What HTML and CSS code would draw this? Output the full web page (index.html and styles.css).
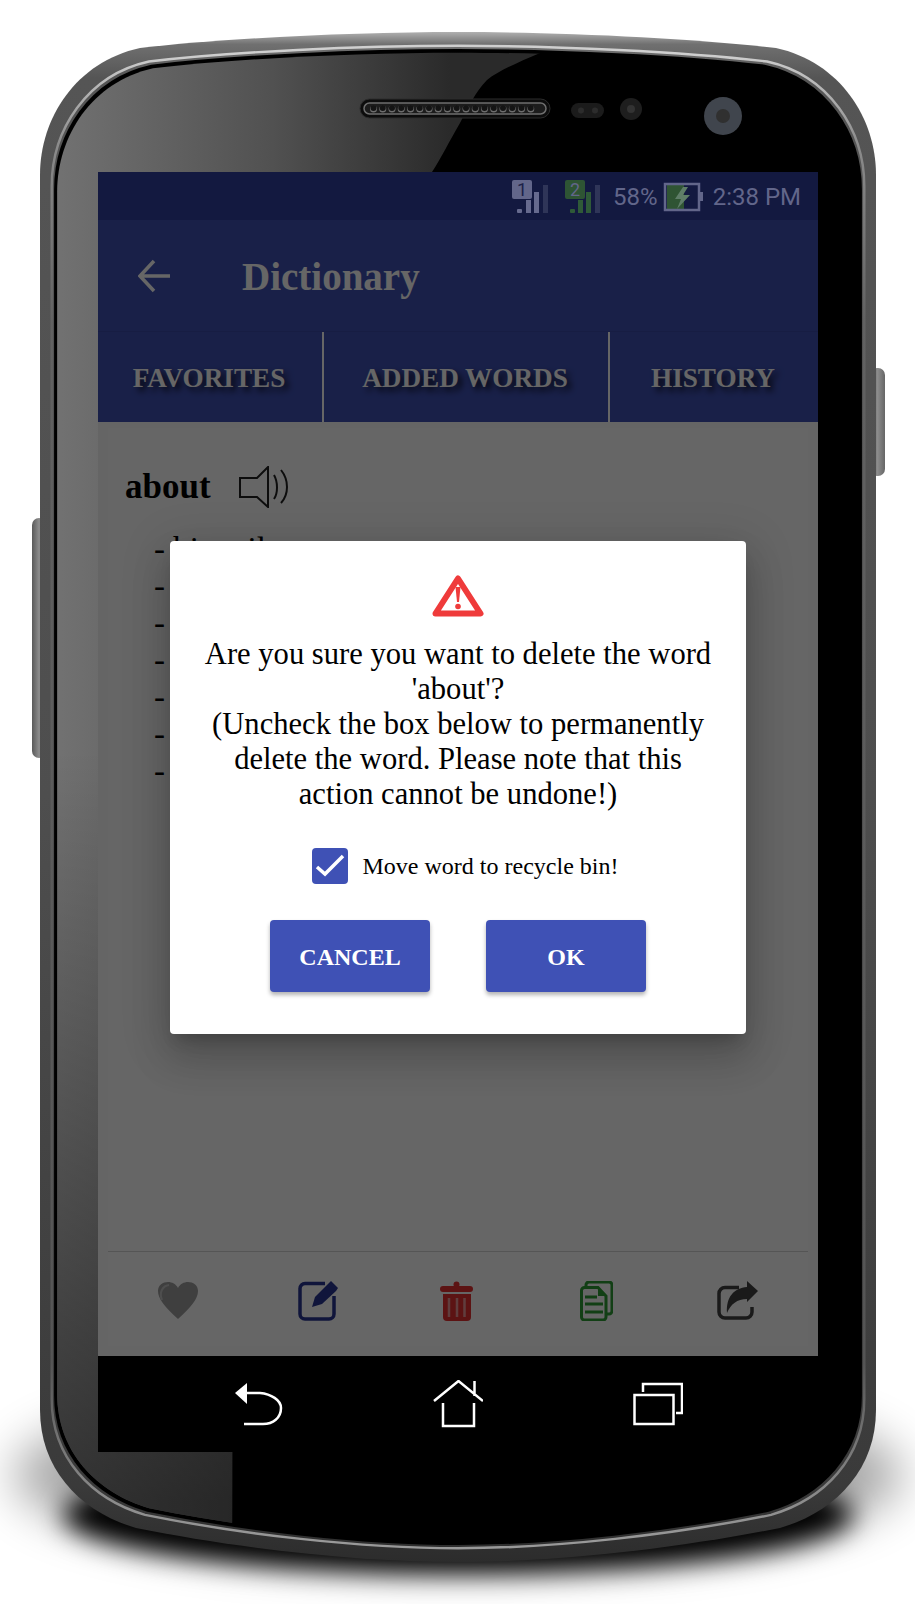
FILE: index.html
```html
<!DOCTYPE html>
<html lang="en">
<head>
    <meta charset="UTF-8">
    <meta name="viewport" content="width=device-width, initial-scale=1.0">
    <title>Dictionary</title>
    <link rel="stylesheet" href="styles.css">
</head>
<body>
    <div class="device">
        <svg class="phone" viewBox="0 0 915 1604" aria-hidden="true">
            <defs>
                <path id="shell" d="M458 32 C560 32 690 38 776 48 C840 62 876 118 876 175 L876 1410 C876 1470 835 1512 780 1528 C680 1548 560 1562 458 1562 C356 1562 236 1548 136 1528 C81 1512 40 1470 40 1410 L40 175 C40 118 76 62 140 48 C226 38 356 32 458 32 Z"/>
                <linearGradient id="frameFill" gradientUnits="userSpaceOnUse" x1="0" y1="32" x2="0" y2="1562">
                    <stop offset="0" stop-color="#b0b0b0"/>
                    <stop offset="0.008" stop-color="#707070"/>
                    <stop offset="0.03" stop-color="#555"/>
                    <stop offset="0.5" stop-color="#4e4e4e"/>
                    <stop offset="0.95" stop-color="#3a3a3a"/>
                    <stop offset="1" stop-color="#2c2c2c"/>
                </linearGradient>
                <linearGradient id="rimFill" gradientUnits="userSpaceOnUse" x1="0" y1="40" x2="0" y2="1555">
                    <stop offset="0" stop-color="#cfcfcf"/>
                    <stop offset="0.06" stop-color="#8c8c8c"/>
                    <stop offset="0.18" stop-color="#626262"/>
                    <stop offset="0.88" stop-color="#555"/>
                    <stop offset="0.97" stop-color="#8a8a8a"/>
                    <stop offset="1" stop-color="#999"/>
                </linearGradient>
                <linearGradient id="glareFill" gradientUnits="userSpaceOnUse" x1="55" y1="0" x2="450" y2="0">
                    <stop offset="0" stop-color="#727272"/>
                    <stop offset="0.55" stop-color="#515151"/>
                    <stop offset="1" stop-color="#2a2a2a"/>
                </linearGradient>
                <linearGradient id="glareFade" gradientUnits="userSpaceOnUse" x1="0" y1="750" x2="0" y2="1500">
                    <stop offset="0" stop-color="#000" stop-opacity="0"/>
                    <stop offset="1" stop-color="#000" stop-opacity="0.55"/>
                </linearGradient>
                <linearGradient id="keyFill" x1="0" y1="0" x2="1" y2="0">
                    <stop offset="0" stop-color="#5a5a5a"/>
                    <stop offset="0.5" stop-color="#8c8c8c"/>
                    <stop offset="1" stop-color="#666"/>
                </linearGradient>
                <clipPath id="glassClip">
                    <use href="#shell" transform="translate(458 797) scale(.959 .973) translate(-458 -797)"/>
                </clipPath>
                <filter id="soften" x="-15%" y="-60%" width="130%" height="220%">
                    <feGaussianBlur stdDeviation="13"/>
                </filter>
                <filter id="softenWide" x="-20%" y="-60%" width="140%" height="220%">
                    <feGaussianBlur stdDeviation="24"/>
                </filter>
            </defs>

            <ellipse cx="458" cy="1475" rx="445" ry="90" fill="#000" opacity="0.35" filter="url(#softenWide)"/>
            <ellipse cx="458" cy="1515" rx="395" ry="58" fill="#000" filter="url(#soften)"/>

            <rect x="32" y="518" width="14" height="240" rx="7" fill="url(#keyFill)"/>
            <rect x="870" y="368" width="15" height="108" rx="7" fill="url(#keyFill)"/>

            <use href="#shell" fill="url(#frameFill)"/>
            <use href="#shell" fill="none" stroke="url(#rimFill)" stroke-width="2.5" transform="translate(458 797) scale(.972 .982) translate(-458 -797)"/>
            <use href="#shell" fill="#000" stroke="#000" stroke-width="2" transform="translate(458 797) scale(.964 .9765) translate(-458 -797)"/>

            <g clip-path="url(#glassClip)">
                <path id="glare" d="M0 20 H610 C555 50 510 62 487 80 C475 92 468 108 460 123 C450 140 440 160 432 172 L234 400 L232 1604 H0 Z" fill="url(#glareFill)"/>
                <path d="M0 700 H234 L232 1604 H0 Z" fill="url(#glareFade)"/>
            </g>

            <rect class="speaker-case" x="360" y="99" width="190" height="19" rx="9.5"/>
            <rect class="speaker-ring" x="364" y="103" width="182" height="11" rx="5.5"/>
            <line class="speaker-holes" x1="373.5" y1="109" x2="540" y2="109"/>
            <line class="speaker-wells" x1="373.5" y1="108" x2="540" y2="108"/>

            <rect x="571" y="103" width="33" height="15" rx="7.5" fill="#1b1b1b"/>
            <circle cx="581" cy="110.5" r="3" fill="#2c2c2c"/>
            <circle cx="595" cy="110.5" r="3" fill="#2c2c2c"/>
            <circle cx="631" cy="109" r="11" fill="#1e1e1e"/>
            <circle cx="631" cy="109" r="4" fill="#333"/>
            <circle cx="723" cy="116" r="19" fill="#40454d"/>
            <circle cx="723" cy="116" r="7" fill="#303030"/>
        </svg>

        <div class="screen">
            <div class="status-bar">
                <svg class="signal" width="38" height="36" viewBox="0 0 38 36">
                    <rect class="sim-one" x="1" y="1" width="20" height="19" rx="2"/>
                    <text class="sim-num sim-num-one" x="11" y="17">1</text>
                    <rect class="bar-on" x="6" y="30" width="5" height="4" rx="1"/>
                    <rect class="bar-on" x="15" y="21" width="5" height="13"/>
                    <rect class="bar-on" x="23" y="13" width="5" height="21"/>
                    <rect class="bar-off" x="32" y="6" width="5" height="28"/>
                </svg>
                <svg class="signal signal-two" width="38" height="36" viewBox="0 0 38 36">
                    <rect class="sim-two" x="1" y="1" width="20" height="19" rx="2"/>
                    <text class="sim-num" x="11" y="17">2</text>
                    <rect class="bar-green" x="6" y="30" width="5" height="4" rx="1"/>
                    <rect class="bar-green" x="14" y="21" width="5" height="13"/>
                    <rect class="bar-green" x="22" y="13" width="5" height="21"/>
                    <rect class="bar-off" x="31" y="6" width="5" height="28"/>
                </svg>
                <span class="status-text battery-level">58%</span>
                <svg class="battery" width="41" height="30" viewBox="0 0 41 30">
                    <rect x="4" y="3" width="17" height="24" fill="#2f5433"/>
                    <rect x="2" y="2" width="34" height="26" fill="none" stroke="#62668a" stroke-width="2.5"/>
                    <rect x="36" y="10" width="4" height="9" fill="#62668a"/>
                    <path d="M20 5 L12 17 H18 L14 27 L27 13 H20 L25 5 Z" fill="#5f7d68"/>
                </svg>
                <span class="status-text clock">2:38 PM</span>
            </div>

            <header class="app-bar">
                <svg class="back-arrow" width="34" height="34" viewBox="0 0 34 34">
                    <path d="M32 17 H3 M16 2 L2 17 L16 32"/>
                </svg>
                <h1 class="app-title">Dictionary</h1>
            </header>

            <nav class="tabs">
                <div class="tab">Favorites</div>
                <div class="tab">Added Words</div>
                <div class="tab">History</div>
            </nav>

            <main class="content">
                <div class="word-card">
                    <div class="word-head">
                        <span class="word">about</span>
                        <svg class="sound" width="50" height="42" viewBox="0 0 50 42">
                            <path d="M1 12 H18 L29 1 V41 L18 31 H1 Z"/>
                            <path d="M35 9 C39 16 39 27 35 33"/>
                            <path d="M42 4 C50 14 50 28 42 37"/>
                        </svg>
                    </div>
                    <ul class="meanings">
                        <li>- bi mail</li>
                        <li>-</li>
                        <li>-</li>
                        <li>-</li>
                        <li>-</li>
                        <li>-</li>
                        <li>-</li>
                    </ul>
                </div>
                <div class="toolbar">
                    <div class="tool">
                        <svg width="42" height="38" viewBox="0 0 42 38">
                            <path class="heart" d="M21 38 C8 26 1 18 1 10 C1 4 6 1 11 1 C15 1 19 3 21 7 C23 3 27 1 31 1 C36 1 41 4 41 10 C41 18 34 26 21 38 Z"/>
                            <path class="heart-shine" d="M5 19 C2 12 5 5 12 4"/>
                        </svg>
                    </div>
                    <div class="tool">
                        <svg width="40" height="40" viewBox="0 0 40 40">
                            <path class="edit-box" d="M27 2.5 H7 a5 5 0 0 0 -5 5 V33 a5 5 0 0 0 5 5 H31 a5 5 0 0 0 5 -5 V15"/>
                            <path class="edit-pen" d="M14 26 L17 16 L31 2 L33 0 L40 7 L38 10 L24 23 Z"/>
                        </svg>
                    </div>
                    <div class="tool tool-trash">
                        <svg width="33" height="40" viewBox="0 0 33 40">
                            <circle class="trash" cx="16.5" cy="3.5" r="3"/>
                            <rect class="trash" x="0" y="5" width="33" height="6" rx="3"/>
                            <path class="trash" d="M3 13 H31 V36 a4 4 0 0 1 -4 4 H7 a4 4 0 0 1 -4 -4 Z"/>
                            <path class="trash-slots" d="M9 17 V36 M17 17 V36 M24.5 17 V36"/>
                        </svg>
                    </div>
                    <div class="tool tool-copy">
                        <svg width="33" height="40" viewBox="0 0 33 40">
                            <path class="copy-line" d="M6 5 V4 a3 3 0 0 1 3 -3 H29 a3 3 0 0 1 3 3 V30 a3 3 0 0 1 -3 3 H27"/>
                            <path class="copy-line" d="M4.5 6.5 H18 L26 15 V36 a3 3 0 0 1 -3 3 H4.5 a3 3 0 0 1 -3 -3 V9.5 a3 3 0 0 1 3 -3 Z"/>
                            <path class="copy-fold" d="M18 6 L27 15 H18 Z"/>
                            <path class="copy-line" d="M5 16 H17 M5 23 H23 M5 31 H23"/>
                        </svg>
                    </div>
                    <div class="tool">
                        <svg width="42" height="39" viewBox="0 0 42 39">
                            <path class="share-box" d="M22 6.5 H8 a6 6 0 0 0 -6 6 V31 a6 6 0 0 0 6 6 H29 a6 6 0 0 0 6 -6 V26"/>
                            <path class="share-arrow" d="M41 10 L30 0 V6 C17 7 9 16 10 32 C14 23 20 18 30 18 V21 Z"/>
                        </svg>
                    </div>
                </div>
            </main>

            <div class="nav-bar">
                <svg class="nav-icon" width="50" height="48" viewBox="0 0 50 48">
                    <path class="nav-head" d="M2 13 L14 3 V24 Z"/>
                    <path d="M14 13 H27 C38 14 48 20 48 28 C48 38 40 44 30 44 H11"/>
                </svg>
                <svg class="nav-icon" width="50" height="48" viewBox="0 0 50 48">
                    <path d="M1 21 L25.5 1 L50 21 M41.5 1 V16 M10 23 V46 H41 V23"/>
                </svg>
                <svg class="nav-icon" width="50" height="48" viewBox="0 0 50 48">
                    <rect x="1.5" y="15" width="39" height="29"/>
                    <path d="M10 12 V4 H49 V33 H43"/>
                </svg>
            </div>

            <div class="scrim">
                <div class="dialog">
                    <svg class="warning" width="52" height="43" viewBox="0 0 52 43">
                        <path class="warning-edge" d="M26 4.5 L48.5 39.5 H3.5 Z"/>
                        <path class="warning-mark" d="M23.5 13 H28.5 L27 28 H25 Z"/>
                        <circle class="warning-dot" cx="26" cy="32.5" r="2.8"/>
                    </svg>
                    <p class="dialog-text">Are you sure you want to delete the word 'about'?<br>(Uncheck the box below to permanently delete the word. Please note that this action cannot be undone!)</p>
                    <label class="recycle">
                        <span class="checkbox">
                            <svg width="36" height="36" viewBox="0 0 36 36"><path d="M5 19 L13 26 L31 8"/></svg>
                        </span>
                        <span class="recycle-text">Move word to recycle bin!</span>
                    </label>
                    <div class="dialog-actions">
                        <button class="dialog-btn">Cancel</button>
                        <button class="dialog-btn">OK</button>
                    </div>
                </div>
            </div>
        </div>
    </div>
</body>
</html>
```

FILE: styles.css
```css
* {
    box-sizing: border-box;
}

body {
    margin: 0;
    background-color: #fff;
    font-family: "Liberation Serif", "Times New Roman", serif;
    color: #000;
}

.device {
    position: relative;
    width: 915px;
    height: 1604px;
    padding: 172px 97px 0 98px;
    overflow: hidden;
}

.phone {
    position: absolute;
    top: 0;
    left: 0;
    width: 915px;
    height: 1604px;
}

.speaker-case {
    fill: #0c0c0c;
    stroke: #2c2c2c;
    stroke-width: 1;
}

.speaker-ring {
    fill: #1c1c1c;
    stroke: #6e6e6e;
    stroke-width: 1.5;
}

.speaker-holes,
.speaker-wells {
    fill: none;
    stroke-linecap: round;
    stroke-dasharray: 0 9.25;
}

.speaker-holes {
    stroke: #6e6e6e;
    stroke-width: 7;
}

.speaker-wells {
    stroke: #141414;
    stroke-width: 6;
}

.screen {
    position: relative;
    width: 720px;
}

/* status bar stays outside the scrim, its colours are already the dimmed ones */
.status-bar {
    display: flex;
    align-items: center;
    justify-content: flex-end;
    height: 48px;
    padding: 1px 17px 0 0;
    background-color: #131940;
}

.signal {
    margin-right: 15px;
}

.signal-two {
    margin-right: 11px;
}

.sim-one {
    fill: #62668a;
}

.sim-two {
    fill: #2e5434;
}

.sim-num {
    font-family: Roboto, sans-serif;
    font-size: 18px;
    text-anchor: middle;
    fill: #62668a;
}

.sim-num-one {
    fill: #1c2148;
}

.bar-on {
    fill: #666a8e;
}

.bar-off {
    fill: #2f3558;
}

.bar-green {
    fill: #2f5a38;
}

.status-text {
    font-family: Roboto, sans-serif;
    font-size: 24px;
    color: #62668a;
}

.battery {
    margin: 0 9px 0 5px;
}

.app-bar {
    display: flex;
    align-items: center;
    height: 112px;
    padding-left: 40px;
    background-color: #3f51b5;
    border-bottom: 1px solid #3a4aa8;
}

.back-arrow path {
    fill: none;
    stroke: #fff;
    stroke-width: 3.5;
}

.app-title {
    margin: 2px 0 0 70px;
    font-size: 39px;
    font-weight: bold;
    color: #fff;
}

.tabs {
    display: grid;
    grid-template-columns: 226px 286px 1fr;
    height: 90px;
    background-color: #3f51b5;
}

.tab {
    display: flex;
    align-items: center;
    justify-content: center;
    padding: 2px 2px 0 0;
    font-size: 27.2px;
    font-weight: bold;
    text-transform: uppercase;
    color: #fff;
    text-shadow: 4px 4px 6px rgba(0, 0, 0, 0.8);
    border-right: 2px solid #fff;
}

.tab:last-child {
    border-right: none;
}

.content {
    display: flex;
    flex-direction: column;
    height: 934px;
    padding: 6px 10px 10px;
    background-color: #fcfcfc;
}

.word-card {
    flex-grow: 1;
    padding-top: 38px;
    background-color: #fff;
}

.word-head {
    display: flex;
    align-items: center;
    gap: 28px;
    padding-left: 17px;
}

.word {
    font-size: 35px;
    font-weight: bold;
}

.sound path {
    fill: none;
    stroke: #222;
    stroke-width: 2;
}

.meanings {
    list-style-type: none;
    margin: 23px 0 0;
    padding: 0 0 0 46px;
    font-size: 33px;
    line-height: 37px;
}

.toolbar {
    display: grid;
    grid-template-columns: repeat(5, 1fr);
    height: 95px;
    padding-top: 29px;
    border-top: 1px solid #d4d4d4;
    background-color: #fff;
}

.tool {
    display: flex;
    justify-content: center;
    align-items: flex-start;
}

.tool-trash {
    padding-right: 4px;
}

.tool-copy {
    padding-right: 3px;
}

.heart {
    fill: #9e9e9e;
}

.heart-shine {
    fill: none;
    stroke: #c4c4c4;
    stroke-width: 2;
}

.edit-box {
    fill: none;
    stroke: #283593;
    stroke-width: 3.5;
}

.edit-pen {
    fill: #283593;
}

.trash {
    fill: #e53030;
}

.trash-slots {
    fill: none;
    stroke: #ef9a9a;
    stroke-width: 2.5;
}

.copy-line {
    fill: none;
    stroke: #2e9e35;
    stroke-width: 3;
}

.copy-fold {
    fill: #2e9e35;
}

.share-box {
    fill: none;
    stroke: #424242;
    stroke-width: 3.5;
}

.share-arrow {
    fill: #424242;
}

.nav-bar {
    display: flex;
    align-items: center;
    justify-content: center;
    gap: 150px;
    height: 96px;
    background-color: #000;
}

.nav-icon path,
.nav-icon rect {
    fill: none;
    stroke: #fff;
    stroke-width: 2.5;
}

.nav-icon .nav-head {
    fill: #fff;
    stroke: none;
}

.scrim {
    position: absolute;
    top: 48px;
    left: 0;
    display: flex;
    align-items: center;
    justify-content: center;
    width: 100%;
    height: 1136px;
    padding-bottom: 2px;
    background-color: rgba(0, 0, 0, 0.6);
}

.dialog {
    display: flex;
    flex-direction: column;
    align-items: center;
    width: 576px;
    height: 493px;
    padding: 33px 32px 42px;
    border-radius: 4px;
    background-color: #fff;
    box-shadow: 0 11px 15px -7px rgba(0, 0, 0, 0.2), 0 24px 38px 3px rgba(0, 0, 0, 0.14), 0 9px 46px 8px rgba(0, 0, 0, 0.12);
}

.warning-edge {
    fill: none;
    stroke: #ef3b3b;
    stroke-width: 6;
    stroke-linejoin: round;
}

.warning-mark,
.warning-dot {
    fill: #ef3b3b;
}

.dialog-text {
    margin: 20px 0 0;
    font-size: 30.6px;
    line-height: 35px;
    text-align: center;
}

.recycle {
    display: flex;
    align-items: center;
    gap: 15px;
    margin-top: 36px;
    padding-left: 14px;
    font-size: 24px;
}

.recycle-text {
    padding-top: 2px;
}

.checkbox {
    width: 36px;
    height: 36px;
    border-radius: 4px;
    background-color: #3f51b5;
}

.checkbox svg {
    display: block;
}

.checkbox path {
    fill: none;
    stroke: #fff;
    stroke-width: 3.5;
}

.dialog-actions {
    display: flex;
    gap: 56px;
    margin-top: 36px;
}

.dialog-btn {
    width: 160px;
    height: 72px;
    padding-top: 4px;
    border: none;
    border-radius: 4px;
    font-family: inherit;
    font-size: 24px;
    font-weight: bold;
    text-transform: uppercase;
    color: #fff;
    background-color: #3f51b5;
    box-shadow: 0 3px 4px rgba(0, 0, 0, 0.3);
}
```
